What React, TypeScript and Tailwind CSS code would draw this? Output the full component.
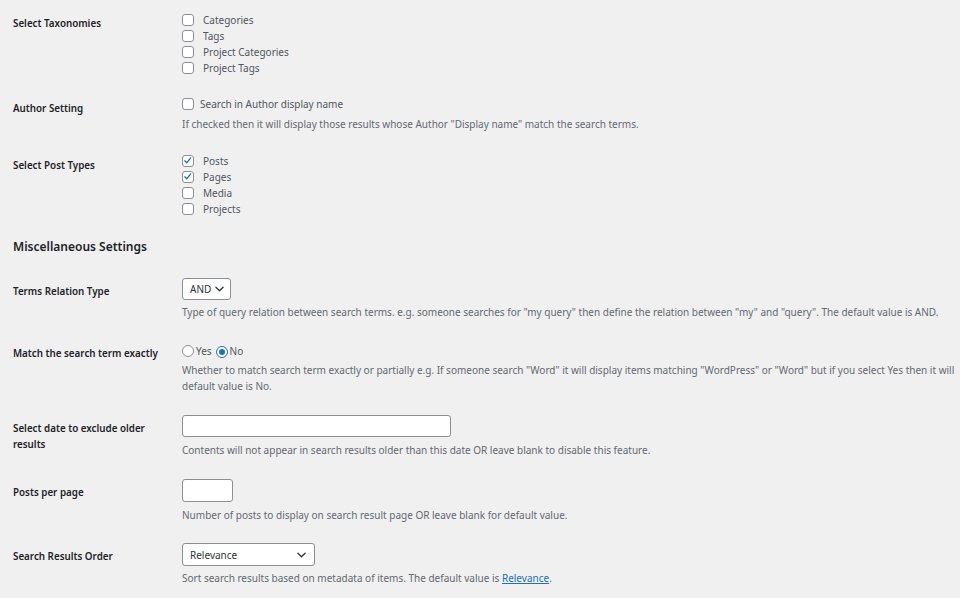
import React from "react";

const font = { fontFamily: '"Noto Sans", "Open Sans", sans-serif' };

function Check({ checked = false }: { checked?: boolean }) {
  return (
    <span className="relative inline-block w-[12px] h-[12px] shrink-0 rounded-[3px] border border-[#8c8f94] bg-white">
      {checked && (
        <svg viewBox="0 0 12 12" className="absolute left-[0px] top-[0px] w-[10px] h-[10px]">
          <path d="M2.2 5.8 L4.5 8.2 L9.2 2.3" fill="none" stroke="#2271b1" strokeWidth="1.6" strokeLinecap="round" strokeLinejoin="round" />
        </svg>
      )}
    </span>
  );
}

function Radio({ checked = false }: { checked?: boolean }) {
  return (
    <span className={`relative inline-flex items-center justify-center w-[12px] h-[12px] shrink-0 rounded-full border bg-white ${checked ? "border-[#2271b1]" : "border-[#8c8f94]"}`}>
      {checked && <span className="block w-[6px] h-[6px] rounded-full bg-[#2271b1]" />}
    </span>
  );
}

function Chevron() {
  return (
    <svg viewBox="0 0 10 6" className="w-[9px] h-[6px]">
      <path d="M1 1 L5 5 L9 1" fill="none" stroke="#2c3338" strokeWidth="1.4" strokeLinecap="round" strokeLinejoin="round" />
    </svg>
  );
}

function CheckRow({ label, checked = false, gap = "gap-[9px]" }: { label: string; checked?: boolean; gap?: string }) {
  return (
    <div className={`flex items-center h-[16px] ${gap}`}>
      <Check checked={checked} />
      <span className="text-[#50575e]">{label}</span>
    </div>
  );
}

function Label({ children, pt }: { children: React.ReactNode; pt: string }) {
  return (
    <div className={`w-[169px] shrink-0 pr-[20px] font-semibold text-[9.8px] text-[#1d2327] leading-[16px] ${pt}`}>{children}</div>
  );
}

function Desc({ children, mt }: { children: React.ReactNode; mt: string }) {
  return <div className={`text-[#646970] leading-[16px] ${mt}`}>{children}</div>;
}

export default function App() {
  return (
    <div className="w-[960px] h-[598px] overflow-hidden bg-[#f0f0f1] text-[10px] leading-[16px]" style={font}>
      <div className="pl-[13px] pt-[12px] flex flex-col">
        {/* Select Taxonomies */}
        <div className="flex">
          <Label pt="pt-[4px]">Select Taxonomies</Label>
          <div className="flex flex-col">
            <CheckRow label="Categories" />
            <CheckRow label="Tags" />
            <CheckRow label="Project Categories" />
            <CheckRow label="Project Tags" />
          </div>
        </div>

        {/* Author Setting */}
        <div className="flex mt-[20px]">
          <Label pt="pt-[5px]">Author Setting</Label>
          <div className="flex flex-col">
            <CheckRow label="Search in Author display name" gap="gap-[6px]" />
            <Desc mt="mt-[4px]">If checked then it will display those results whose Author "Display name" match the search terms.</Desc>
          </div>
        </div>

        {/* Select Post Types */}
        <div className="flex mt-[21px]">
          <Label pt="pt-[5px]">Select Post Types</Label>
          <div className="flex flex-col">
            <CheckRow label="Posts" checked />
            <CheckRow label="Pages" checked />
            <CheckRow label="Media" />
            <CheckRow label="Projects" />
          </div>
        </div>

        {/* Heading */}
        <h2 className="mt-[21px] text-[12px] leading-[18px] font-semibold text-[#1d2327]">Miscellaneous Settings</h2>

        {/* Terms Relation Type */}
        <div className="flex mt-[22px]">
          <Label pt="pt-[6px]">Terms Relation Type</Label>
          <div className="flex flex-col">
            <div className="w-[49px] h-[22px] rounded-[3px] border border-[#8c8f94] bg-white flex items-center pl-[7px] gap-[4px] text-[#2c3338]">
              <span>AND</span>
              <Chevron />
            </div>
            <Desc mt="mt-[4px]">
              <span className="whitespace-nowrap">Type of query relation between search terms. e.g. someone searches for "my query" then define the relation between "my" and "query". The default value is AND.</span>
            </Desc>
          </div>
        </div>

        {/* Match exactly */}
        <div className="flex mt-[23px]">
          <Label pt="pt-[3px]">Match the search term exactly</Label>
          <div className="flex flex-col">
            <div className="flex items-center h-[16px] text-[#50575e]">
              <Radio />
              <span className="ml-[2px]">Yes</span>
              <span className="ml-[4px]"><Radio checked /></span>
              <span className="ml-[2px]">No</span>
            </div>
            <Desc mt="mt-[3px]">
              <div className="w-[778px] overflow-hidden whitespace-nowrap">Whether to match search term exactly or partially e.g. If someone search "Word" it will display items matching "WordPress" or "Word" but if you select Yes then it will</div>
              <div className="whitespace-nowrap">default value is No.</div>
            </Desc>
          </div>
        </div>

        {/* Date */}
        <div className="flex mt-[21px]">
          <Label pt="pt-[6px]">Select date to exclude older results</Label>
          <div className="flex flex-col">
            <div className="w-[269px] h-[22px] rounded-[3px] border border-[#8c8f94] bg-white" />
            <Desc mt="mt-[5px]">Contents will not appear in search results older than this date OR leave blank to disable this feature.</Desc>
          </div>
        </div>

        {/* Posts per page */}
        <div className="flex mt-[21px]">
          <Label pt="pt-[6px]">Posts per page</Label>
          <div className="flex flex-col">
            <div className="w-[51px] h-[23px] rounded-[3px] border border-[#8c8f94] bg-white" />
            <Desc mt="mt-[5px]">Number of posts to display on search result page OR leave blank for default value.</Desc>
          </div>
        </div>

        {/* Search Results Order */}
        <div className="flex mt-[20px]">
          <Label pt="pt-[6px]">Search Results Order</Label>
          <div className="flex flex-col">
            <div className="w-[133px] h-[23px] rounded-[3px] border border-[#8c8f94] bg-white flex items-center justify-between pl-[7px] pr-[8px] text-[#2c3338]">
              <span>Relevance</span>
              <Chevron />
            </div>
            <Desc mt="mt-[4px]">
              Sort search results based on metadata of items. The default value is{" "}
              <a className="text-[#2271b1] underline">Relevance</a>.
            </Desc>
          </div>
        </div>
      </div>
    </div>
  );
}
